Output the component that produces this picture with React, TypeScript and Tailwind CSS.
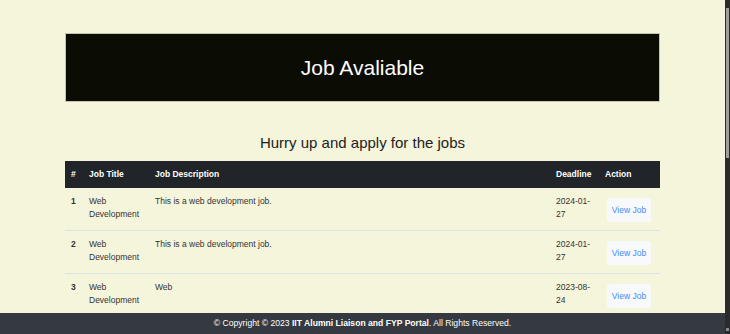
const jobs = [
  { id: 1, title: "Web Development", description: "This is a web development job.", deadline: "2024-01-27" },
  { id: 2, title: "Web Development", description: "This is a web development job.", deadline: "2024-01-27" },
  { id: 3, title: "Web Development", description: "Web", deadline: "2023-08-24" },
];

function JobRow({ job }: { job: (typeof jobs)[number] }) {
  return (
    <tr className="border-b border-[#dee2e6] align-top text-[#333]">
      <td className="px-[6px] pt-[7px] pb-[5px] font-bold">{job.id}</td>
      <td className="px-[6px] pt-[7px] pb-[5px]">{job.title}</td>
      <td className="px-[6px] pt-[7px] pb-[5px]">{job.description}</td>
      <td className="px-[6px] pt-[7px] pb-[5px]">{job.deadline}</td>
      <td className="px-[6px] pt-[7px] pb-[5px]">
        <button className="my-[3px] ml-[2px] block h-[24px] w-[44px] rounded-[3px] bg-[#f8f9fb] text-[8.5px] text-[#3d8bfd]">
          View Job
        </button>
      </td>
    </tr>
  );
}

function App() {
  return (
    <div className="flex h-[334px] w-[730px] overflow-hidden font-['Liberation_Sans',Arial,sans-serif]">
      <div className="flex h-full w-[725px] flex-col bg-[#f5f5dc]">
        <main className="flex-1 overflow-hidden pt-[33px]">
          <div className="mx-auto w-[595px]">
            <div className="flex h-[69px] items-center justify-center border border-[#c4c4b2] bg-[#0b0c04]">
              <h1 className="text-[21px] text-white">Job Avaliable</h1>
            </div>
            <h3 className="mt-[32px] text-center text-[15px] leading-[18px] text-[#222]">
              Hurry up and apply for the jobs
            </h3>
            <table className="mt-[9px] w-full table-fixed border-collapse text-left text-[8.5px] leading-[12.6px]">
              <thead>
                <tr className="h-[27px] bg-[#212529] text-white">
                  <th className="w-[18px] px-[6px] font-bold">#</th>
                  <th className="w-[66px] px-[6px] font-bold">Job Title</th>
                  <th className="px-[6px] font-bold">Job Description</th>
                  <th className="w-[49px] px-[6px] font-bold">Deadline</th>
                  <th className="w-[61px] px-[6px] font-bold">Action</th>
                </tr>
              </thead>
              <tbody>
                {jobs.map((job) => (
                  <JobRow key={job.id} job={job} />
                ))}
              </tbody>
            </table>
          </div>
        </main>
        <footer className="flex h-[21px] items-center justify-center bg-[#343a40] text-[8.6px] text-white">
          © Copyright © 2023&nbsp;<b>IIT Alumni Liaison and FYP Portal</b>. All Rights Reserved.
        </footer>
      </div>
      <div className="flex w-[5px] flex-col bg-[#2b2b2b]">
        <div className="mt-[8px] ml-[1px] h-[150px] w-[3px] bg-[#9e9e9e]" />
        <div className="flex-1" />
        <div className="mb-[3px] ml-[1px] h-[3px] w-[3px] bg-[#8a8a8a]" />
      </div>
    </div>
  );
}

export default App;
